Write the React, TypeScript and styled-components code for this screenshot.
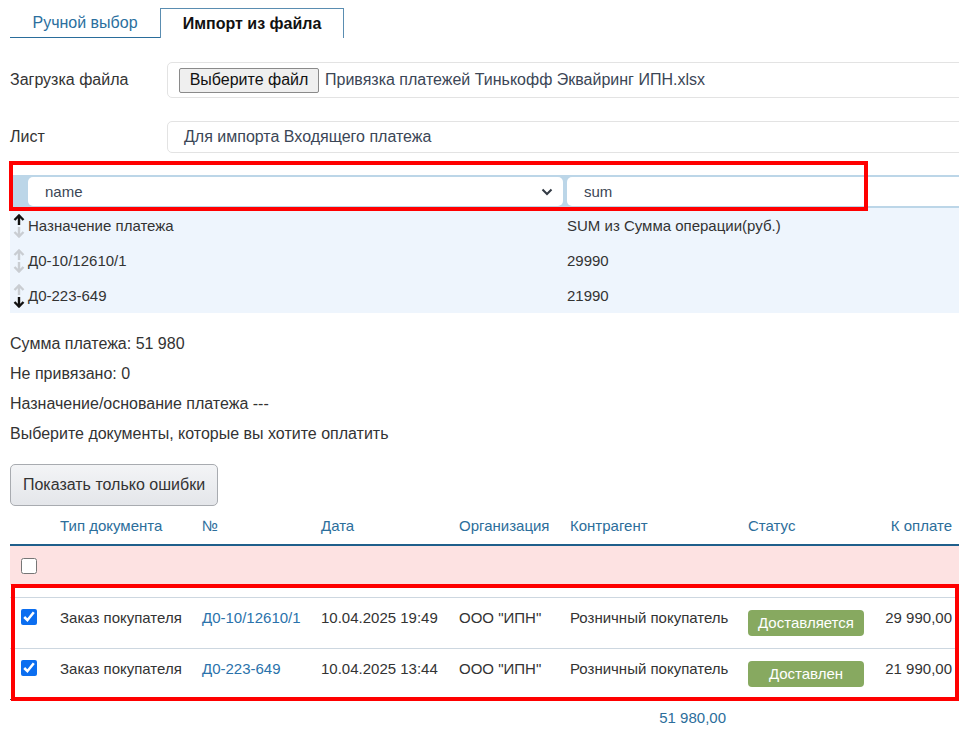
import React from "react";
import styled, { createGlobalStyle } from "styled-components";

const GlobalStyle = createGlobalStyle`
  html, body { margin: 0; padding: 0; background: #ffffff; overflow: hidden; }
  body { font-family: "Liberation Sans", Arial, sans-serif; color: #333333; }
  * { box-sizing: border-box; }
`;

const Page = styled.div`
  width: 985px;
  padding: 8px 0 0 10px;
`;

const Tabs = styled.div`
  display: flex;
  height: 30px;
`;

const Tab = styled.div<{ $active?: boolean }>`
  display: flex;
  align-items: center;
  justify-content: center;
  font-size: 16px;
  height: 30px;
  width: ${(p) => (p.$active ? "184px" : "150px")};
  color: ${(p) => (p.$active ? "#111111" : "#2b6f9e")};
  font-weight: ${(p) => (p.$active ? 700 : 400)};
  border: ${(p) => (p.$active ? "1px solid #5a8db1" : "none")};
  border-bottom: ${(p) => (p.$active ? "none" : "1px solid #2a6d9b")};
  padding-top: 1px;
`;

const FormRow = styled.div<{ $mt: number }>`
  display: flex;
  align-items: center;
  margin-top: ${(p) => p.$mt}px;
`;

const Label = styled.div`
  width: 157px;
  font-size: 16px;
  color: #333333;
`;

const Field = styled.div<{ $h: number; $pl: number }>`
  flex: 1;
  height: ${(p) => p.$h}px;
  border: 1px solid #e3e3e3;
  border-radius: 5px;
  padding-left: ${(p) => p.$pl}px;
  display: flex;
  align-items: center;
  gap: 6px;
  font-size: 16px;
  color: #3b4656;
`;

const FileButton = styled.button`
  font-family: "Liberation Sans", Arial, sans-serif;
  font-size: 16px;
  color: #111111;
  height: 25px;
  width: 140px;
  padding: 0;
  background: #efefef;
  border: 1px solid #8a8a8a;
  border-radius: 2px;
`;

const Mapping = styled.div`
  position: relative;
  margin-top: 22px;
`;

const MapRow = styled.div<{ $head?: boolean }>`
  display: grid;
  grid-template-columns: 18px 535px 4px 1fr;
  align-items: center;
  background: ${(p) => (p.$head ? "#bcd6e8" : "#eef5fd")};
  height: ${(p) => (p.$head ? "33px" : "35px")};
  padding: ${(p) => (p.$head ? "2px 0" : "0")};
  font-size: 15px;
  color: #333333;
`;

const MapSelect = styled.div`
  grid-column: 2;
  height: 29px;
  background: #ffffff;
  border-radius: 5px;
  display: flex;
  align-items: center;
  justify-content: space-between;
  padding: 0 10px 0 17px;
  font-size: 15px;
  color: #3b4656;
`;

const MapInput = styled.div`
  grid-column: 4;
  height: 29px;
  background: #ffffff;
  border-radius: 5px 0 0 5px;
  display: flex;
  align-items: center;
  padding-left: 17px;
  font-size: 15px;
  color: #3b4656;
`;

const MapCell = styled.div<{ $col: number }>`
  grid-column: ${(p) => p.$col};
  white-space: nowrap;
`;

const ArrowCol = styled.div`
  grid-column: 1;
  display: flex;
  flex-direction: column;
  align-items: center;
  gap: 2px;
  margin-left: -1px;
`;

const Highlight = styled.div<{ $top: number; $left: number; $w: number; $h: number }>`
  position: absolute;
  top: ${(p) => p.$top}px;
  left: ${(p) => p.$left}px;
  width: ${(p) => p.$w}px;
  height: ${(p) => p.$h}px;
  border: 4px solid #ff0000;
  pointer-events: none;
`;

const Info = styled.div`
  margin-top: 16px;
`;

const InfoLine = styled.div`
  font-size: 16px;
  line-height: 30px;
  color: #333333;
`;

const ErrorsButton = styled.button`
  margin-top: 15px;
  height: 42px;
  width: 208px;
  font-family: "Liberation Sans", Arial, sans-serif;
  font-size: 16px;
  color: #333333;
  background: linear-gradient(#f3f4f6, #e4e6ea);
  border: 1px solid #a8abb0;
  border-radius: 5px;
  padding: 0;
`;

const TableWrap = styled.div`
  position: relative;
  width: 949px;
`;

const Table = styled.table`
  width: 949px;
  border-collapse: collapse;
  table-layout: fixed;
  font-size: 15px;
`;

const Th = styled.th<{ $right?: boolean }>`
  height: 39px;
  font-weight: 400;
  color: #2c6e9b;
  text-align: ${(p) => (p.$right ? "right" : "left")};
  padding: 0 ${(p) => (p.$right ? "7px" : "0")} 0 10px;
  border-bottom: 2px solid #1f5f8b;
  white-space: nowrap;
`;

const ErrorRow = styled.tr`
  background: #fde2e2;
  height: 40px;
`;

const Spacer = styled.tr`
  height: 12px;
`;

const DataRow = styled.tr<{ $last?: boolean }>`
  height: 51px;
  border-top: 1px solid #cdd7e0;
  border-bottom: ${(p) => (p.$last ? "1px solid #23506f" : "none")};
`;

const Td = styled.td<{ $right?: boolean; $link?: boolean }>`
  vertical-align: top;
  padding: 11px ${(p) => (p.$right ? "7px" : "0")} 0 10px;
  line-height: 18px;
  color: ${(p) => (p.$link ? "#2a72ab" : "#333333")};
  text-align: ${(p) => (p.$right ? "right" : "left")};
  white-space: nowrap;
`;

const CheckCell = styled.td<{ $center?: boolean }>`
  vertical-align: ${(p) => (p.$center ? "middle" : "top")};
  padding: ${(p) => (p.$center ? "0 0 0 11px" : "11px 0 0 11px")};
`;

const Check = styled.input`
  width: 16px;
  height: 16px;
  margin: 0;
  display: block;
  accent-color: #0b6ef0;
`;

const Badge = styled.span`
  display: inline-flex;
  align-items: center;
  justify-content: center;
  width: 116px;
  height: 26px;
  margin-top: 1px;
  background: #87a960;
  color: #ffffff;
  border-radius: 4px;
  font-size: 15px;
`;

const FooterCell = styled.td`
  height: 36px;
  text-align: right;
  padding-right: 12px;
  color: #2c6e9b;
  font-size: 15px;
`;

const Arrow = ({ dir, dark }: { dir: "up" | "down"; dark: boolean }) => (
  <svg width="12" height="11" viewBox="0 0 12 11" style={{ display: "block" }}>
    <g
      transform={dir === "down" ? "rotate(180 6 5.5)" : undefined}
      stroke={dark ? "#111111" : "#c9cdd2"}
      strokeWidth="2.4"
      fill="none"
      strokeLinecap="butt"
      strokeLinejoin="miter"
    >
      <path d="M6 1.6 V11" />
      <path d="M1.5 6 L6 1.5 L10.5 6" />
    </g>
  </svg>
);

const Chevron = () => (
  <svg width="12" height="8" viewBox="0 0 12 8">
    <path d="M1.5 1.5 L6 6 L10.5 1.5" stroke="#333a44" strokeWidth="2" fill="none" />
  </svg>
);

const mapRows = [
  { a: "Назначение платежа", b: "SUM из Сумма операции(руб.)", up: true, down: false },
  { a: "Д0-10/12610/1", b: "29990", up: false, down: false },
  { a: "Д0-223-649", b: "21990", up: false, down: true },
];

const docs = [
  { type: "Заказ покупателя", num: "Д0-10/12610/1", date: "10.04.2025 19:49", org: "ООО \"ИПН\"", ctr: "Розничный покупатель", status: "Доставляется", sum: "29 990,00" },
  { type: "Заказ покупателя", num: "Д0-223-649", date: "10.04.2025 13:44", org: "ООО \"ИПН\"", ctr: "Розничный покупатель", status: "Доставлен", sum: "21 990,00" },
];

export default function App() {
  return (
    <>
      <GlobalStyle />
      <Page>
        <Tabs>
          <Tab>Ручной выбор</Tab>
          <Tab $active>Импорт из файла</Tab>
        </Tabs>

        <FormRow $mt={24}>
          <Label>Загрузка файла</Label>
          <Field $h={36} $pl={11}>
            <FileButton>Выберите файл</FileButton>
            <span>Привязка платежей Тинькофф Эквайринг ИПН.xlsx</span>
          </Field>
        </FormRow>
        <FormRow $mt={23}>
          <Label>Лист</Label>
          <Field $h={32} $pl={16}>Для импорта Входящего платежа</Field>
        </FormRow>

        <Mapping>
          <MapRow $head>
            <MapSelect>
              <span>name</span>
              <Chevron />
            </MapSelect>
            <MapInput>sum</MapInput>
          </MapRow>
          {mapRows.map((r) => (
            <MapRow key={r.a}>
              <ArrowCol>
                <Arrow dir="up" dark={r.up} />
                <Arrow dir="down" dark={r.down} />
              </ArrowCol>
              <MapCell $col={2}>{r.a}</MapCell>
              <MapCell $col={4}>{r.b}</MapCell>
            </MapRow>
          ))}
          <Highlight $top={-14} $left={-1} $w={859} $h={50} />
        </Mapping>

        <Info>
          <InfoLine>Сумма платежа: 51 980</InfoLine>
          <InfoLine>Не привязано: 0</InfoLine>
          <InfoLine>Назначение/основание платежа ---</InfoLine>
          <InfoLine>Выберите документы, которые вы хотите оплатить</InfoLine>
        </Info>

        <ErrorsButton>Показать только ошибки</ErrorsButton>

        <TableWrap>
          <Table>
            <colgroup>
              <col style={{ width: 40 }} />
              <col style={{ width: 142 }} />
              <col style={{ width: 119 }} />
              <col style={{ width: 138 }} />
              <col style={{ width: 111 }} />
              <col style={{ width: 178 }} />
              <col style={{ width: 134 }} />
              <col style={{ width: 87 }} />
            </colgroup>
            <thead>
              <tr>
                <Th />
                <Th>Тип документа</Th>
                <Th>№</Th>
                <Th>Дата</Th>
                <Th>Организация</Th>
                <Th>Контрагент</Th>
                <Th>Статус</Th>
                <Th $right>К оплате</Th>
              </tr>
            </thead>
            <tbody>
              <ErrorRow>
                <CheckCell $center>
                  <Check type="checkbox" readOnly />
                </CheckCell>
                <td colSpan={7} />
              </ErrorRow>
              <Spacer>
                <td colSpan={8} />
              </Spacer>
              {docs.map((d, i) => (
                <DataRow key={d.num} $last={i === docs.length - 1}>
                  <CheckCell>
                    <Check type="checkbox" checked readOnly />
                  </CheckCell>
                  <Td>{d.type}</Td>
                  <Td $link>{d.num}</Td>
                  <Td>{d.date}</Td>
                  <Td>{d.org}</Td>
                  <Td>{d.ctr}</Td>
                  <Td>
                    <Badge>{d.status}</Badge>
                  </Td>
                  <Td $right>{d.sum}</Td>
                </DataRow>
              ))}
              <tr>
                <td colSpan={5} />
                <FooterCell>51 980,00</FooterCell>
                <td colSpan={2} />
              </tr>
            </tbody>
          </Table>
          <Highlight $top={78} $left={1} $w={948} $h={117} />
        </TableWrap>
      </Page>
    </>
  );
}
